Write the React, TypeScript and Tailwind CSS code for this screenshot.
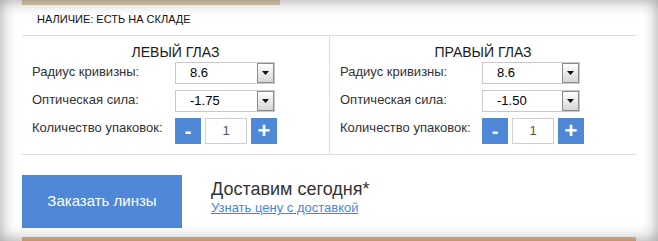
import React from "react";

const font = { fontFamily: '"Liberation Sans", Arial, sans-serif' };

function Select({ value, w }: { value: string; w: string }) {
  return (
    <div className={`flex h-[22px] ${w} border border-[#c9c9c9] bg-white`}>
      <div className="flex-1 pl-[14px] text-[13px] leading-[20px] text-black">{value}</div>
      <div className="flex h-[20px] w-[17px] items-center justify-center border border-[#8c8c8c] bg-gradient-to-b from-white to-[#d6d6d6]">
        <svg width="7" height="4" viewBox="0 0 7 4">
          <path d="M0 0H7L3.5 4Z" fill="#111" />
        </svg>
      </div>
    </div>
  );
}

function Counter() {
  return (
    <div className="flex h-[26px] gap-[4px]">
      <div className="flex w-[26px] items-center justify-center bg-[#4f88d6] text-[20px] font-bold leading-none text-white">-</div>
      <div className="flex w-[42px] items-center justify-center border border-[#d0d0d0] bg-white text-[13px] text-[#555]">1</div>
      <div className="flex w-[26px] items-center justify-center bg-[#4f88d6] text-[22px] font-bold leading-none text-white">+</div>
    </div>
  );
}

function Eye({
  title,
  radius,
  power,
  labelW,
  selW,
  border,
}: {
  title: string;
  radius: string;
  power: string;
  labelW: string;
  selW: string;
  border?: boolean;
}) {
  return (
    <div className={`flex flex-col pt-[8px] pb-[10px] pl-[10px] ${border ? "border-r border-[#dedede]" : ""}`}>
      <div className="pr-[10px] text-center text-[14px] leading-[16px] text-[#1a1a1a]">{title}</div>
      <div className="mt-[2px] flex flex-col gap-[6px]">
        <div className="flex items-start">
          <div className={`${labelW} pt-[2px] text-[13px] leading-[15px] text-[#333]`}>Радиус кривизны:</div>
          <Select value={radius} w={selW} />
        </div>
        <div className="flex items-start">
          <div className={`${labelW} pt-[2px] text-[13px] leading-[15px] text-[#333]`}>Оптическая сила:</div>
          <Select value={power} w={selW} />
        </div>
        <div className="flex items-start">
          <div className={`${labelW} pt-[2px] text-[13px] leading-[15px] text-[#333]`}>Количество упаковок:</div>
          <Counter />
        </div>
      </div>
    </div>
  );
}

export default function App() {
  return (
    <div className="relative h-[241px] w-[658px] overflow-hidden bg-white" style={font}>
      <div className="ml-[22px] w-[614px]">
        <div className="h-[5px] w-[258px] bg-[#dccdb2]" />
        <div className="h-[31px] border-b border-[#dedede] pl-[15px] pt-[8px] text-[11px] leading-[13px] text-[#111]">
          НАЛИЧИЕ: ЕСТЬ НА СКЛАДЕ
        </div>
        <div className="grid grid-cols-[308px_306px] border-b border-[#dedede]">
          <Eye title="ЛЕВЫЙ ГЛАЗ" radius="8.6" power="-1.75" labelW="w-[143px]" selW="w-[100px]" border />
          <Eye title="ПРАВЫЙ ГЛАЗ" radius="8.6" power="-1.50" labelW="w-[142px]" selW="w-[98px]" />
        </div>
        <div className="mt-[20px] flex items-start">
          <div className="flex h-[53px] w-[160px] items-center justify-center bg-[#4f88d6] text-[15px] text-white">
            Заказать линзы
          </div>
          <div className="ml-[29px] flex flex-col pt-[4px]">
            <div className="text-[18px] leading-[21px] text-[#333]">Доставим сегодня*</div>
            <a className="text-[13px] leading-[15px] text-[#4a86d4] underline">Узнать цену с доставкой</a>
          </div>
        </div>
        <div className="mt-[9px] h-[6px] w-[614px] bg-[#f0b88c]" />
      </div>
      <div className="pointer-events-none absolute inset-0 shadow-[inset_0_0_16px_rgba(0,0,0,0.4)]" />
    </div>
  );
}
